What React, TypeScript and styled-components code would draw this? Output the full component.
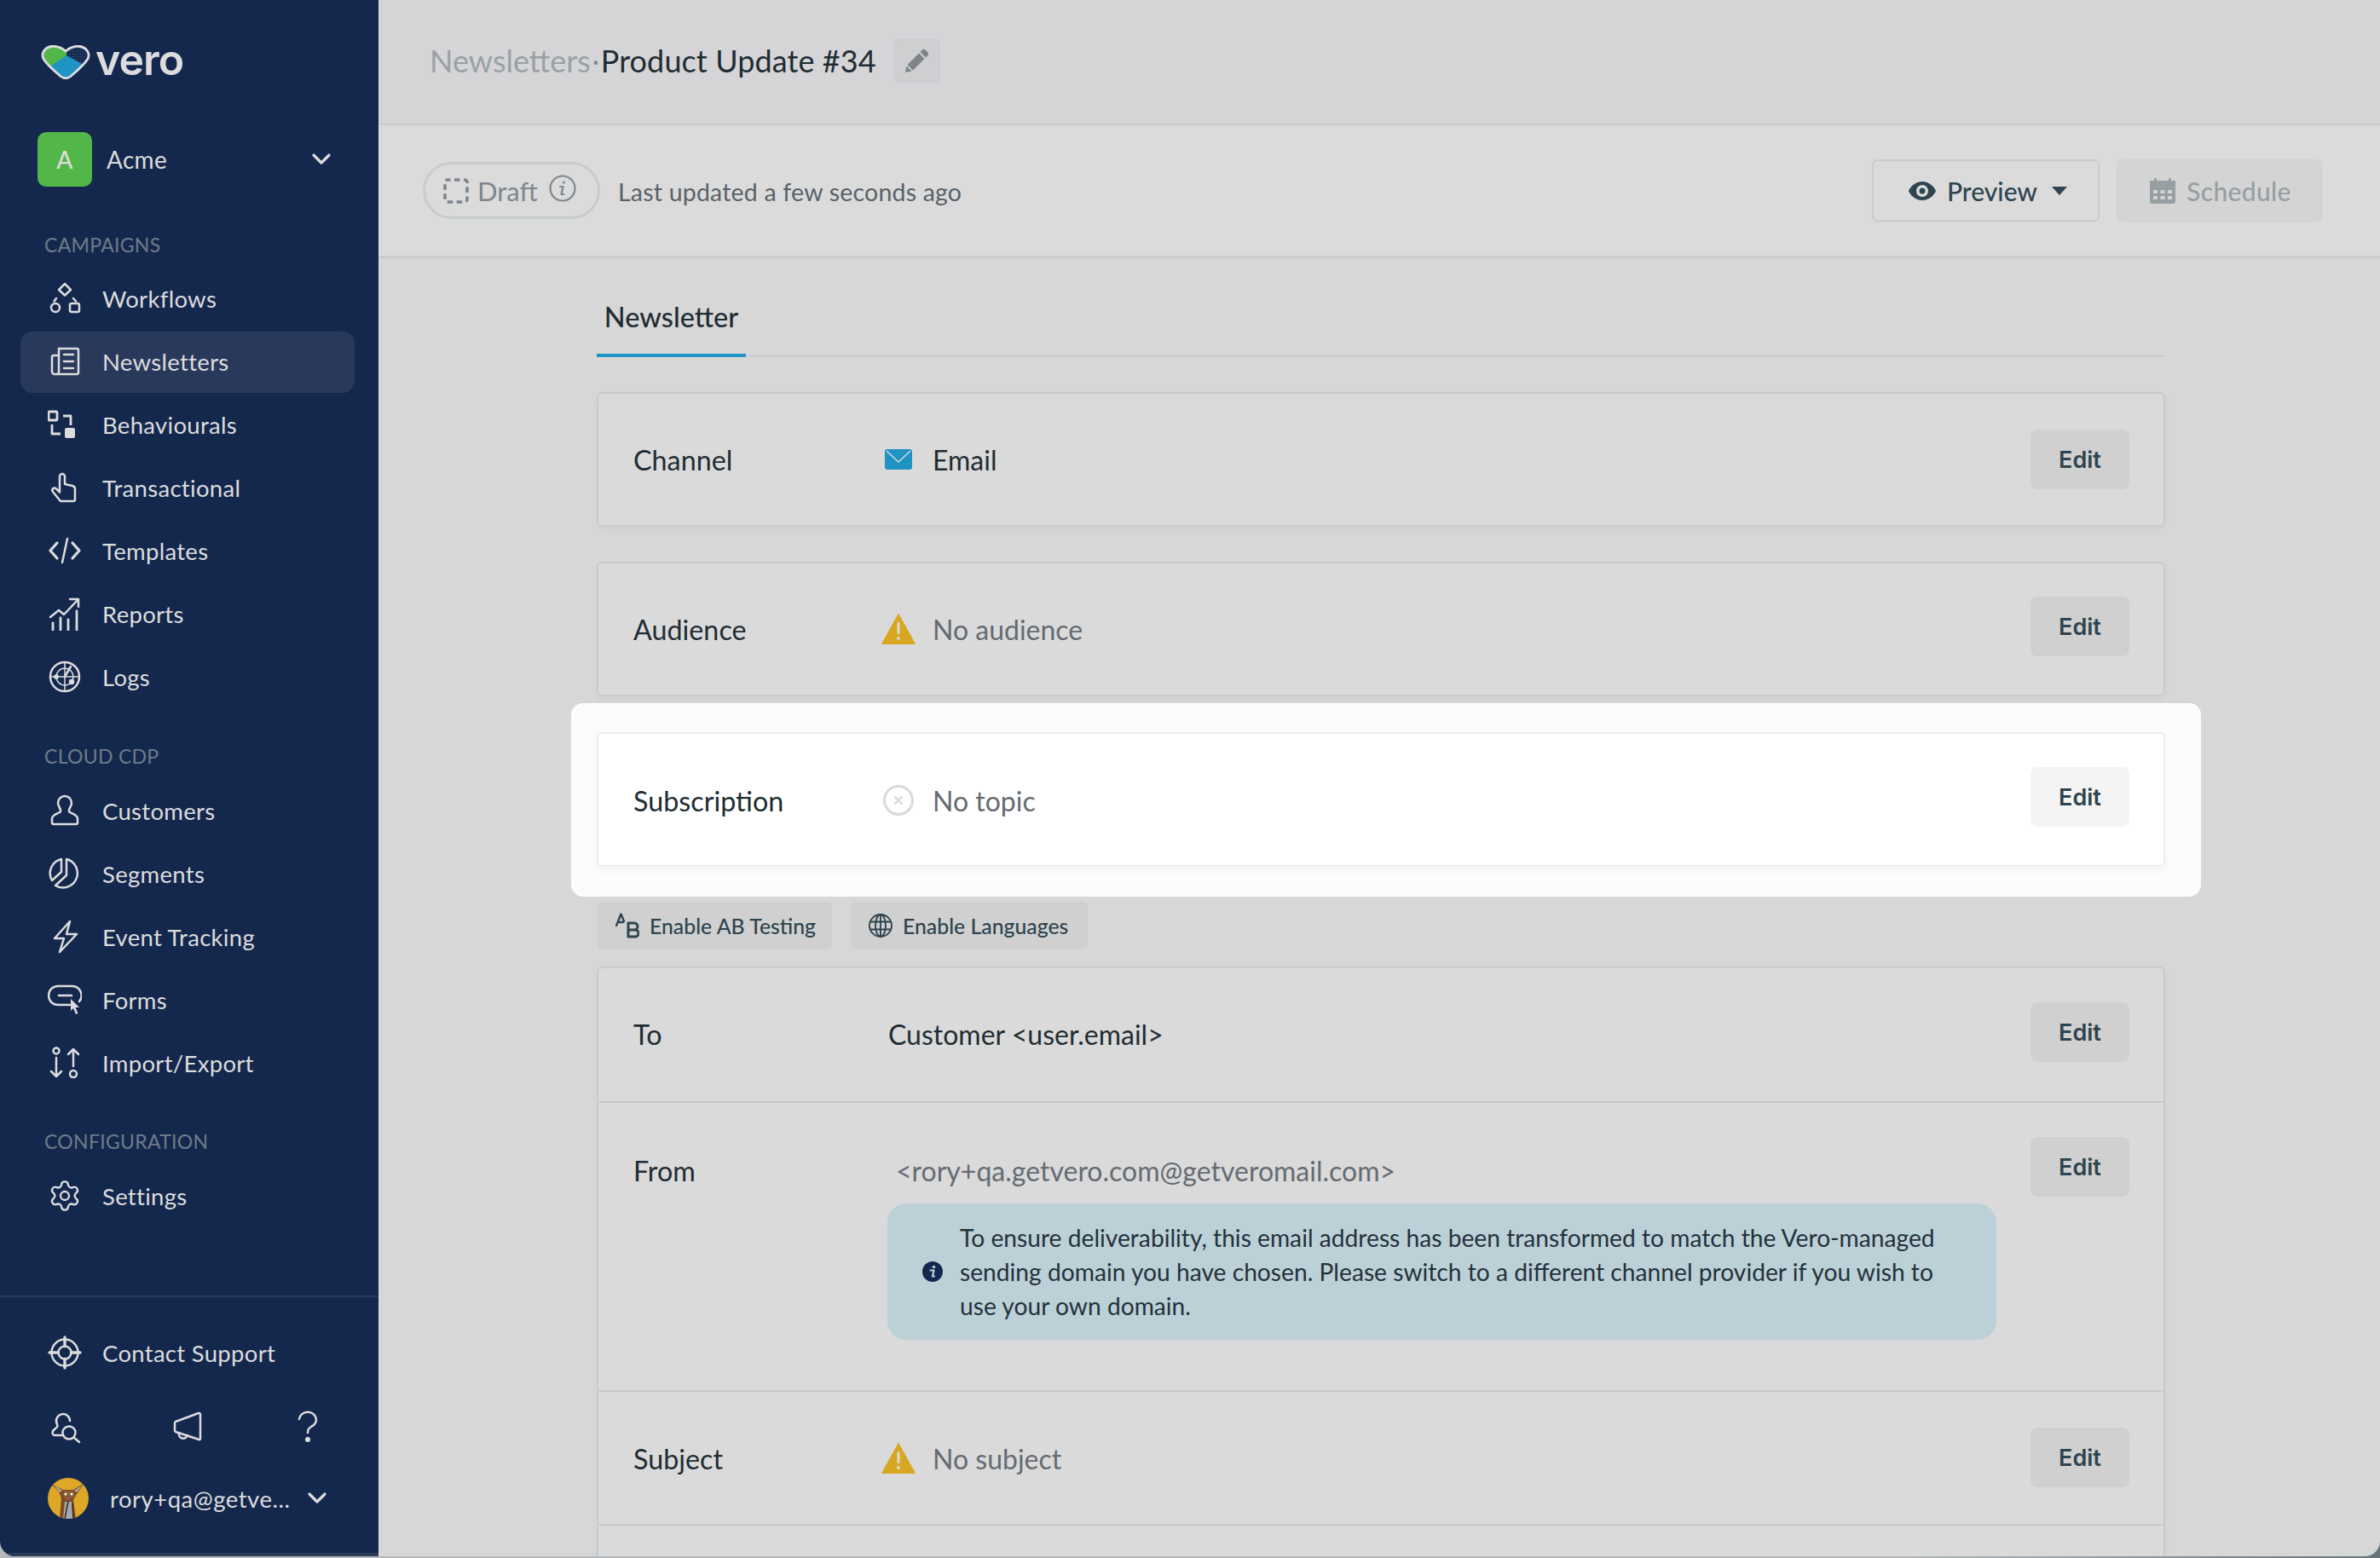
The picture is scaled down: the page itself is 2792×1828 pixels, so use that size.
import React from "react";
import styled, { createGlobalStyle } from "styled-components";
import { Settings } from "lucide-react";

const Global = createGlobalStyle`
  * { box-sizing: border-box; }
  html, body { margin: 0; padding: 0; background: linear-gradient(90deg, #b4b8ba 0%, #b4b8ba 80%, #66747a 100%); }
  body { font-family: "Lato", "Open Sans", sans-serif; -webkit-font-smoothing: antialiased; min-height: 1828px; }
`;

const Window = styled.div`
  width: 2792px;
  height: 1826px;
  display: flex;
  overflow: hidden;
  border-radius: 0 0 18px 18px;
  background: #d7d7d7;
`;

const Sidebar = styled.aside`
  width: 444px;
  flex: none;
  height: 100%;
  background: #14284e;
  box-shadow: inset 0 -4px 0 #2d3b59;
  color: #dcdcdc;
  display: flex;
  flex-direction: column;
`;

const LogoRow = styled.div`
  margin: 53px 0 0 48px;
  height: 40px;
  display: flex;
  align-items: center;
  gap: 6px;
`;

const LogoWord = styled.span`
  font-family: "Inter", sans-serif;
  font-weight: 600;
  font-size: 50px;
  line-height: 40px;
  letter-spacing: -1px;
  color: #dcdcdc;
  margin-top: -6px;
`;

const Workspace = styled.div`
  margin: 62px 55px 0 44px;
  height: 64px;
  display: flex;
  align-items: center;
  gap: 17px;
  font-size: 28px;
  letter-spacing: 0.3px;
`;

const WorkspaceBadge = styled.div`
  width: 64px;
  height: 64px;
  border-radius: 10px;
  background: #53b649;
  display: flex;
  align-items: center;
  justify-content: center;
  color: #dcdcdc;
  font-size: 28px;
  font-weight: 500;
`;

const Grow = styled.span`
  flex: 1;
  min-width: 0;
`;

const SectionLabel = styled.div<{ $top: number; $bottom?: number }>`
  margin: ${(p) => p.$top}px 0 ${(p) => p.$bottom ?? 14}px 52px;
  height: 30px;
  line-height: 30px;
  font-size: 23px;
  letter-spacing: 0.3px;
  color: #6f7b89;
`;

const NavList = styled.nav`
  display: flex;
  flex-direction: column;
  gap: 2px;
`;

const NavItem = styled.div<{ $active?: boolean }>`
  margin: 0 28px 0 24px;
  height: 72px;
  padding: 0 0 2px 32px;
  display: flex;
  align-items: center;
  gap: 24px;
  border-radius: 14px;
  font-size: 27.5px;
  letter-spacing: 0.3px;
  background: ${(p) => (p.$active ? "#29395c" : "transparent")};
`;

const Footer = styled.div`
  margin-top: auto;
  border-top: 2px solid #29395c;
  padding: 30px 0 44px;
`;

const IconRow = styled.div`
  margin: 20px 63px 0 58px;
  height: 60px;
  display: flex;
  align-items: center;
  justify-content: space-between;
`;

const UserRow = styled.div`
  margin: 30px 60px 0 56px;
  height: 48px;
  display: flex;
  align-items: center;
  gap: 25px;
  font-size: 27.5px;
  letter-spacing: 0.5px;
`;

const Main = styled.main`
  flex: 1;
  min-width: 0;
  display: flex;
  flex-direction: column;
  overflow: hidden;
`;

const TopBar = styled.header`
  height: 147px;
  flex: none;
  padding: 0 0 3px 60px;
  background: #d5d5d7;
  border-bottom: 2px solid #c7cbce;
  display: flex;
  align-items: center;
`;

const Crumb = styled.span`
  font-size: 36px;
  color: #9aa1a5;
`;

const CrumbDot = styled.span`
  font-size: 30px;
  color: #7f888d;
  margin: 0 2px;
`;

const Title = styled.span`
  font-size: 36px;
  letter-spacing: 0.1px;
  color: #1f2d33;
`;

const PencilButton = styled.button`
  margin-left: 21px;
  width: 54px;
  height: 52px;
  border: 2px solid #cbcdd0;
  border-radius: 6px;
  background: #cfcfd1;
  padding: 0;
  display: flex;
  align-items: center;
  justify-content: center;
`;

const StatusBar = styled.div`
  height: 156px;
  flex: none;
  padding: 0 68px 0 52px;
  background: #dbdbdb;
  border-bottom: 3px solid #c8ccce;
  display: flex;
  align-items: center;
`;

const DraftPill = styled.div`
  width: 208px;
  height: 67px;
  border: 3px solid #c6ccd0;
  border-radius: 34px;
  padding: 0 0 0 21px;
  display: flex;
  align-items: center;
  color: #7e868e;
  font-size: 31px;
`;

const DraftText = styled.span`
  margin: 0 13px 0 10px;
`;

const UpdatedText = styled.span`
  margin: 2px 0 0 21px;
  font-size: 28.5px;
  letter-spacing: 0.2px;
  color: #596269;
  flex: 1;
`;

const OutlineButton = styled.button`
  width: 267px;
  height: 73px;
  border: 2px solid #c6ccd0;
  border-radius: 6px;
  background: #dbdbdb;
  display: flex;
  align-items: center;
  justify-content: center;
  gap: 13px;
  font-family: inherit;
  font-size: 30px;
  font-weight: 500;
  color: #2e444f;
  padding: 0 0 0 5px;
`;

const DisabledButton = styled(OutlineButton)`
  width: 241px;
  margin-left: 20px;
  padding: 0 0 0 3px;
  letter-spacing: 0.3px;
  background: #d4d4d4;
  border-color: #d0d1d2;
  color: #979fa3;
`;

const Caret = styled.span`
  width: 0;
  height: 0;
  margin-left: 4px;
  border-left: 9px solid transparent;
  border-right: 9px solid transparent;
  border-top: 10px solid #2e444f;
`;

const Content = styled.div`
  margin-left: 256px;
  width: 1840px;
  display: flex;
  flex-direction: column;
`;

const Tabs = styled.div`
  height: 116px;
  flex: none;
  border-bottom: 2px solid #c5cbcf;
  display: flex;
`;

const Tab = styled.div`
  width: 175px;
  height: 116px;
  padding-top: 24px;
  border-bottom: 4px solid #2093c5;
  display: flex;
  align-items: center;
  justify-content: center;
  font-size: 32.5px;
  font-weight: 500;
  color: #1f2d33;
`;

const Card = styled.section<{ $lit?: boolean; $top?: number }>`
  margin-top: ${(p) => p.$top ?? 0}px;
  flex: none;
  border: 2px solid ${(p) => (p.$lit ? "#ecedf0" : "#c5cbcf")};
  border-radius: 6px;
  background: ${(p) => (p.$lit ? "#ffffff" : "#dadada")};
  box-shadow: 0 4px 8px ${(p) => (p.$lit ? "rgba(40,50,80,.05)" : "rgba(0,0,0,.03)")};
`;

const Spotlight = styled.div`
  margin: 8px -42px 0 -30px;
  padding: 34px 42px 35px 30px;
  flex: none;
  background: #fcfcfc;
  border-radius: 14px;
`;

const Row = styled.div<{ $divided?: boolean; $top?: number; $bottom?: number }>`
  display: flex;
  align-items: flex-start;
  padding: ${(p) => p.$top ?? 42}px 40px ${(p) => p.$bottom ?? 42}px 41px;
  border-bottom: ${(p) => (p.$divided ? "2px solid #c5cbcf" : "none")};
`;

const Label = styled.div<{ $drop?: number }>`
  width: 291px;
  height: 70px;
  padding-top: ${(p) => p.$drop ?? 0}px;
  flex: none;
  display: flex;
  align-items: center;
  font-size: 32.3px;
  color: #1f2d33;
`;

const Value = styled.div`
  flex: 1;
  min-width: 0;
  display: flex;
  flex-direction: column;
`;

const ValueLine = styled.div<{ $muted?: boolean; $inset?: number; $drop?: number }>`
  height: 70px;
  padding: ${(p) => p.$drop ?? 0}px 0 0 ${(p) => p.$inset ?? 0}px;
  display: flex;
  align-items: center;
  gap: 20px;
  font-size: 32px;
  color: ${(p) => (p.$muted ? "#656b72" : "#1f2d33")};
`;

const EditButton = styled.button<{ $lit?: boolean }>`
  width: 116px;
  height: 70px;
  flex: none;
  border: none;
  border-radius: 8px;
  background: ${(p) => (p.$lit ? "#f4f4f4" : "#d0d0d0")};
  font-family: "Inter", sans-serif;
  font-size: 27px;
  font-weight: 600;
  color: #2e444f;
  padding: 0;
`;

const ToggleRow = styled.div`
  margin: 6px 0 20px;
  display: flex;
  gap: 21px;
`;

const ToggleButton = styled.button<{ $width: number }>`
  width: ${(p) => p.$width}px;
  height: 56px;
  border: none;
  border-radius: 6px;
  background: #d0d0d0;
  padding: 0 0 0 22px;
  display: flex;
  align-items: center;
  gap: 12px;
  font-family: inherit;
  font-size: 24.8px;
  font-weight: 500;
  color: #2e444f;
`;

const Notice = styled.div`
  margin: 8px 0 0 7px;
  width: 1301px;
  height: 160px;
  padding-left: 41px;
  border-radius: 22px;
  background: #bcd0d8;
  display: flex;
  align-items: center;
  gap: 20px;
  font-size: 28.2px;
  line-height: 40px;
  color: #24323a;
`;

const Svg = styled.svg<{ $size: number }>`
  width: ${(p) => p.$size}px;
  height: ${(p) => p.$size}px;
  flex: none;
  display: block;
`;

const Icon = ({ children, size = 40 }: { children: React.ReactNode; size?: number }) => (
  <Svg
    $size={size}
    viewBox="0 0 40 40"
    fill="none"
    stroke="currentColor"
    strokeWidth={2.5}
    strokeLinecap="round"
    strokeLinejoin="round"
  >
    {children}
  </Svg>
);

const LogoMark = () => (
  <svg width="58" height="40" viewBox="0 0 58 40" style={{ flex: "none" }}>
    <defs>
      <clipPath id="logoClip">
        <path d="M3 16C0 10 4 3 12 1.500C18 .5 24 3 29 7C34 3 40 .5 46 1.500C54 3 58 10 55 16C51 23 39 33 35 36.500C31 39.500 27 39.500 23 36.500C19 33 7 23 3 16Z" />
      </clipPath>
      <pattern id="logoDots" width="3" height="3" patternUnits="userSpaceOnUse">
        <rect width="3" height="3" fill="#14284e" />
        <circle cx="1.500" cy="1.500" r="0.800" fill="#35507f" />
      </pattern>
    </defs>
    <g clipPath="url(#logoClip)">
      <rect width="58" height="40" fill="url(#logoDots)" />
      <path d="M0 0H30V12L10 28L0 22Z" fill="#53b649" />
      <path d="M30 12L54 25L30 44L8 27Z" fill="#2093c5" />
    </g>
    <path
      d="M3 16C0 10 4 3 12 1.500C18 .5 24 3 29 7C34 3 40 .5 46 1.500C54 3 58 10 55 16C51 23 39 33 35 36.500C31 39.500 27 39.500 23 36.500C19 33 7 23 3 16Z"
      fill="none"
      stroke="#dcdcdc"
      strokeWidth="2.800"
    />
  </svg>
);

const Chevron = () => (
  <svg width="24" height="16" viewBox="0 0 24 16" fill="none" stroke="#dcdcdc" strokeWidth="3.200" strokeLinecap="round" strokeLinejoin="round" style={{ flex: "none" }}>
    <path d="M3 3l9 9 9-9" />
  </svg>
);

const WorkflowsIcon = () => (
  <Icon>
    <path d="M20 3l7 7-7 6.500-7-6.500z" />
    <circle cx="9" cy="31" r="5" />
    <rect x="26" y="26" width="11" height="10" rx="2" />
    <path d="M10 20l-2.500 3.500M30 20l3 3.500" />
  </Icon>
);
const NewslettersIcon = () => (
  <Icon>
    <path d="M13 5h21a2 2 0 0 1 2 2v26a2 2 0 0 1-2 2H8a3 3 0 0 1-3-3V15a2 2 0 0 1 2-2h6" />
    <path d="M13 5v28a2 2 0 0 1-2 2M19 12h11M19 20h11M19 28h11" />
  </Icon>
);
const BehaviouralsIcon = () => (
  <Icon>
    <rect x="1" y="5" width="10" height="10" rx="1" strokeWidth="2.800" />
    <path d="M18 10h9v11M5 20v11h10" strokeWidth="2.800" strokeLinecap="butt" />
    <rect x="20" y="24" width="12" height="12" rx="2" fill="currentColor" stroke="none" />
  </Icon>
);
const TransactionalIcon = () => (
  <Icon>
    <path d="M14 7a3 3 0 0 1 6 0v9l9 2a4 4 0 0 1 3 4v12a2 2 0 0 1-2 2H15L6 25a2.600 2.600 0 0 1 4-3.500l4 4Z" />
  </Icon>
);
const TemplatesIcon = () => (
  <Icon>
    <path d="M11 11l-8 9 8 9M29 11l8 9-8 9" strokeWidth="3.200" />
    <path d="M23 6l-6 28" />
  </Icon>
);
const ReportsIcon = () => (
  <Icon>
    <path d="M3 24l10-8 6 5L36 3M26 3h10v9" />
    <path d="M6 31v8M15 25v14M24 27v12M34 17v22" strokeWidth="2.800" />
  </Icon>
);
const LogsIcon = () => (
  <Icon>
    <circle cx="20" cy="20" r="17" />
    <circle cx="20" cy="20" r="10" strokeWidth="1.500" />
    <path d="M20 3v34M3 20h34" strokeWidth="1.500" />
    <path d="M20 20l7-12" />
    <circle cx="28" cy="26" r="2" fill="currentColor" />
    <circle cx="10" cy="20" r="1.600" fill="currentColor" />
  </Icon>
);
const CustomersIcon = () => (
  <Icon>
    <path d="M20 3a8 8 0 0 1 8 8c0 4-3 6-3 9v1c0 2 9 3 10 8v5a2 2 0 0 1-2 2H7a2 2 0 0 1-2-2v-5c1-5 10-6 10-8v-1c0-3-3-5-3-9a8 8 0 0 1 8-8Z" />
  </Icon>
);
const SegmentsIcon = () => (
  <Icon>
    <path d="M22 3a17 17 0 1 1-13 31l13-12Z" />
    <path d="M16 3A17 17 0 0 0 5 28l11-10Z" />
  </Icon>
);
const EventIcon = () => (
  <Icon>
    <path d="M26 2L8 22h11l-5 16 20-21H22Z" />
  </Icon>
);
const FormsIcon = () => (
  <Icon>
    <path d="M26 26H12a11 11 0 0 1 0-22h17a11 11 0 0 1 8 18" />
    <path d="M13 15h15" strokeWidth="2.600" />
    <path d="M27 19v14l3-3 3 7 2.500-1-3-7h4.500Z" fill="currentColor" stroke="none" />
  </Icon>
);
const ImportIcon = () => (
  <Icon>
    <circle cx="10" cy="6" r="3.500" />
    <path d="M10 14v22M4 30l6 6 6-6M30 24V4M24 10l6-6 6 6" />
    <circle cx="30" cy="33" r="4" />
  </Icon>
);
const SupportIcon = () => (
  <Icon>
    <circle cx="20" cy="20" r="15.500" />
    <circle cx="20" cy="20" r="7.500" />
    <path d="M20 2v10.500M20 27.500V38M2 20h10.500M27.500 20H38" strokeWidth="3.400" />
  </Icon>
);
const PersonSearchIcon = () => (
  <Icon>
    <path d="M24 13a8 8 0 1 0-15 4c1 2 0 4-2 5l-3 3c-1 3 0 5 2 5h10" />
    <circle cx="23" cy="27" r="7.500" />
    <path d="M29 33l6 5" />
  </Icon>
);
const MegaphoneIcon = () => (
  <Icon>
    <path d="M35 5v29a1 1 0 0 1-1.500 1L6 26a2 2 0 0 1-1-2v-8a2 2 0 0 1 1-2L33 4a1.500 1.500 0 0 1 2 1Z" />
    <path d="M10 27a5 5 0 0 0 10 3" />
  </Icon>
);
const QuestionIcon = () => (
  <Icon>
    <path d="M10 11a10 9 0 1 1 14 9c-3 1.500-4 3-4 7" />
    <circle cx="20" cy="35" r="1.800" fill="currentColor" />
  </Icon>
);

const Avatar = () => (
  <svg width="48" height="48" viewBox="0 0 48 48" style={{ flex: "none" }}>
    <circle cx="24" cy="24" r="24" fill="#dca826" />
    <clipPath id="avatarClip"><circle cx="24" cy="24" r="24" /></clipPath>
    <g clipPath="url(#avatarClip)">
      <path d="M4 7l14 7 12 0 13-8-9 13-4 7 3 22H14l2-24-3-8Z" fill="#7a4a2a" />
      <path d="M7 8l10 7-3 2ZM41 8l-10 7 3 2Z" fill="#b9a89a" />
      <path d="M19 15h11l2 7-8 5-7-5Z" fill="#8d5a34" />
      <path d="M20 28h8l2 20h-12Z" fill="#a5a9ac" />
      <path d="M24 27l-4 21M29 30l1 18" stroke="#3b2415" strokeWidth="1.500" />
      <circle cx="21" cy="19" r="1.500" fill="#fff" />
      <circle cx="28" cy="19" r="1.500" fill="#fff" />
    </g>
  </svg>
);

const PencilIcon = () => (
  <svg width="30" height="30" viewBox="0 0 30 30" fill="#7c8489">
    <path d="M21 2.500a2.500 2.500 0 0 1 3.500 0l3 3a2.500 2.500 0 0 1 0 3.500L25 11.500 18.500 5ZM17 6.500 23.500 13 10 26.500 3.500 20ZM2.500 21.500l6 6L1 29Z" />
  </svg>
);

const DashedSquare = () => (
  <svg width="30" height="30" viewBox="0 0 30 30" fill="none" stroke="#7e868e" strokeWidth="3.600" style={{ flex: "none" }}>
    <rect x="2" y="2" width="26" height="26" rx="3" strokeDasharray="6.500 4.500" strokeDashoffset="3" />
  </svg>
);

const InfoOutline = () => (
  <svg width="32" height="32" viewBox="0 0 32 32" fill="none" stroke="#7e868e" strokeWidth="2.200" style={{ flex: "none", marginTop: "-6px" }}>
    <circle cx="16" cy="16" r="14.500" />
    <path d="M13 14h3.500l-2 9h3" strokeLinecap="round" strokeLinejoin="round" />
    <circle cx="17.500" cy="9" r="1.600" fill="#7e868e" stroke="none" />
  </svg>
);

const EyeIcon = () => (
  <svg width="32" height="22" viewBox="0 0 32 22" style={{ flex: "none" }}>
    <path fillRule="evenodd" d="M16 0C24 0 30 6 32 11c-2 5-8 11-16 11S2 16 0 11C2 6 8 0 16 0Zm0 4a7 7 0 1 0 0 14 7 7 0 0 0 0-14Zm0 3.500a3.500 3.500 0 1 1 0 7 3.500 3.500 0 0 1 0-7Z" fill="#2e444f" />
  </svg>
);

const CalendarIcon = () => (
  <svg width="30" height="30" viewBox="0 0 30 30" style={{ flex: "none" }}>
    <path fillRule="evenodd" fill="#979fa3" d="M0 3h5V0h3v3h14V0h3v3h5v24a3 3 0 0 1-3 3H3a3 3 0 0 1-3-3Zm4 11v4h5v-4Zm8.500 0v4h5v-4Zm8.500 0v4h5v-4ZM4 21v4h5v-4Zm8.500 0v4h5v-4Zm8.500 0v4h5v-4Z" />
  </svg>
);

const MailIcon = () => (
  <Svg $size={40} viewBox="0 0 40 40">
    <rect x="4" y="8" width="32" height="24" rx="3" fill="#2093c5" />
    <path d="M6 10l14 13L34 10" fill="none" stroke="#dadada" strokeWidth="1.500" />
  </Svg>
);

const WarnIcon = () => (
  <Svg $size={40} viewBox="0 0 40 40">
    <path d="M20 1.500 39.500 36.500a1 1 0 0 1-1 1.500H1.500a1 1 0 0 1-1-1.500Z" fill="#d8a722" />
    <rect x="18.500" y="12" width="3" height="14" rx="1.500" fill="#dadada" />
    <circle cx="20" cy="31" r="1.900" fill="#dadada" />
  </Svg>
);

const CrossCircle = () => (
  <Svg $size={40} viewBox="0 0 40 40" fill="none" stroke="#d8dadd" strokeWidth="3">
    <circle cx="20" cy="20" r="16.500" />
    <path d="M15.500 15.500l9 9M24.500 15.500l-9 9" strokeWidth="2.400" />
  </Svg>
);

const AbIcon = () => (
  <svg width="28" height="30" viewBox="0 0 28 30" fill="none" stroke="#2e444f" style={{ flex: "none" }}>
    <path d="M1 15 6.500 1.500 10 10M3 11h6" strokeWidth="2.400" strokeLinejoin="round" strokeLinecap="round" />
    <path d="M15 12h7a4 4 0 0 1 0 8h-7Zm0 8h8a4 4 0 0 1 0 8h-8Z" strokeWidth="3" strokeLinejoin="round" />
  </svg>
);

const GlobeIcon = () => (
  <svg width="28" height="28" viewBox="0 0 28 28" fill="none" stroke="#2e444f" strokeWidth="1.900" style={{ flex: "none" }}>
    <circle cx="14" cy="14" r="13" />
    <ellipse cx="14" cy="14" rx="6" ry="13" />
    <path d="M14 1v26M2 9.500h24M2 18.500h24" />
  </svg>
);

const NoticeIcon = () => (
  <svg width="24" height="24" viewBox="0 0 24 24" style={{ flex: "none" }}>
    <circle cx="12" cy="12" r="12" fill="#14284e" />
    <path d="M9.500 10.500h4l-1.500 7h2" fill="none" stroke="#bcd0d8" strokeWidth="2.200" strokeLinecap="round" strokeLinejoin="round" />
    <circle cx="13.500" cy="6.500" r="1.800" fill="#bcd0d8" />
  </svg>
);

const campaigns: [string, React.ReactNode, boolean?][] = [
  ["Workflows", <WorkflowsIcon />],
  ["Newsletters", <NewslettersIcon />, true],
  ["Behaviourals", <BehaviouralsIcon />],
  ["Transactional", <TransactionalIcon />],
  ["Templates", <TemplatesIcon />],
  ["Reports", <ReportsIcon />],
  ["Logs", <LogsIcon />],
];
const cdp: [string, React.ReactNode, boolean?][] = [
  ["Customers", <CustomersIcon />],
  ["Segments", <SegmentsIcon />],
  ["Event Tracking", <EventIcon />],
  ["Forms", <FormsIcon />],
  ["Import/Export", <ImportIcon />],
];

const NavGroup = ({ items }: { items: [string, React.ReactNode, boolean?][] }) => (
  <NavList>
    {items.map(([label, icon, active]) => (
      <NavItem key={label} $active={active}>
        {icon}
        {label}
      </NavItem>
    ))}
  </NavList>
);

export default function App() {
  return (
    <>
      <Global />
      <Window>
        <Sidebar>
          <LogoRow>
            <LogoMark />
            <LogoWord>vero</LogoWord>
          </LogoRow>
          <Workspace>
            <WorkspaceBadge>A</WorkspaceBadge>
            <Grow>Acme</Grow>
            <Chevron />
          </Workspace>
          <SectionLabel $top={53} $bottom={13}>CAMPAIGNS</SectionLabel>
          <NavGroup items={campaigns} />
          <SectionLabel $top={41}>CLOUD CDP</SectionLabel>
          <NavGroup items={cdp} />
          <SectionLabel $top={40}>CONFIGURATION</SectionLabel>
          <NavItem>
            <Settings size={40} strokeWidth={1.4} />
            Settings
          </NavItem>
          <Footer>
            <NavItem>
              <SupportIcon />
              Contact Support
            </NavItem>
            <IconRow>
              <PersonSearchIcon />
              <MegaphoneIcon />
              <QuestionIcon />
            </IconRow>
            <UserRow>
              <Avatar />
              <Grow>rory+qa@getve...</Grow>
              <Chevron />
            </UserRow>
          </Footer>
        </Sidebar>
        <Main>
          <TopBar>
            <Crumb>Newsletters</Crumb>
            <CrumbDot>·</CrumbDot>
            <Title>Product Update #34</Title>
            <PencilButton>
              <PencilIcon />
            </PencilButton>
          </TopBar>
          <StatusBar>
            <DraftPill>
              <DashedSquare />
              <DraftText>Draft</DraftText>
              <InfoOutline />
            </DraftPill>
            <UpdatedText>Last updated a few seconds ago</UpdatedText>
            <OutlineButton>
              <EyeIcon />
              Preview
              <Caret />
            </OutlineButton>
            <DisabledButton>
              <CalendarIcon />
              Schedule
            </DisabledButton>
          </StatusBar>
          <Content>
            <Tabs>
              <Tab>Newsletter</Tab>
            </Tabs>
            <Card $top={41}>
              <Row>
                <Label>Channel</Label>
                <Value>
                  <ValueLine>
                    <MailIcon />
                    Email
                  </ValueLine>
                </Value>
                <EditButton>Edit</EditButton>
              </Row>
            </Card>
            <Card $top={41}>
              <Row $top={39} $bottom={45}>
                <Label $drop={6}>Audience</Label>
                <Value>
                  <ValueLine $muted $drop={6}>
                    <WarnIcon />
                    No audience
                  </ValueLine>
                </Value>
                <EditButton>Edit</EditButton>
              </Row>
            </Card>
            <Spotlight>
              <Card $lit>
                <Row $top={39} $bottom={45}>
                  <Label $drop={8}>Subscription</Label>
                  <Value>
                    <ValueLine $muted $drop={8}>
                      <CrossCircle />
                      No topic
                    </ValueLine>
                  </Value>
                  <EditButton $lit>Edit</EditButton>
                </Row>
              </Card>
            </Spotlight>
            <ToggleRow>
              <ToggleButton $width={276}>
                <AbIcon />
                Enable AB Testing
              </ToggleButton>
              <ToggleButton $width={279}>
                <GlobeIcon />
                Enable Languages
              </ToggleButton>
            </ToggleRow>
            <Card>
              <Row $divided $top={40} $bottom={46}>
                <Label $drop={5}>To</Label>
                <Value>
                  <ValueLine $inset={8} $drop={5}>Customer &lt;user.email&gt;</ValueLine>
                </Value>
                <EditButton>Edit</EditButton>
              </Row>
              <Row $divided $top={40} $bottom={59}>
                <Label $drop={8}>From</Label>
                <Value>
                  <ValueLine $muted $inset={17} $drop={8}>
                    &lt;rory+qa.getvero.com@getveromail.com&gt;
                  </ValueLine>
                  <Notice>
                    <NoticeIcon />
                    <span>
                      To ensure deliverability, this email address has been transformed to match the Vero-managed
                      <br />
                      sending domain you have chosen. Please switch to a different channel provider if you wish to
                      <br />
                      use your own domain.
                    </span>
                  </Notice>
                </Value>
                <EditButton>Edit</EditButton>
              </Row>
              <Row $divided $bottom={43}>
                <Label $drop={2}>Subject</Label>
                <Value>
                  <ValueLine $muted $drop={2}>
                    <WarnIcon />
                    No subject
                  </ValueLine>
                </Value>
                <EditButton>Edit</EditButton>
              </Row>
              <Row />
            </Card>
          </Content>
        </Main>
      </Window>
    </>
  );
}
